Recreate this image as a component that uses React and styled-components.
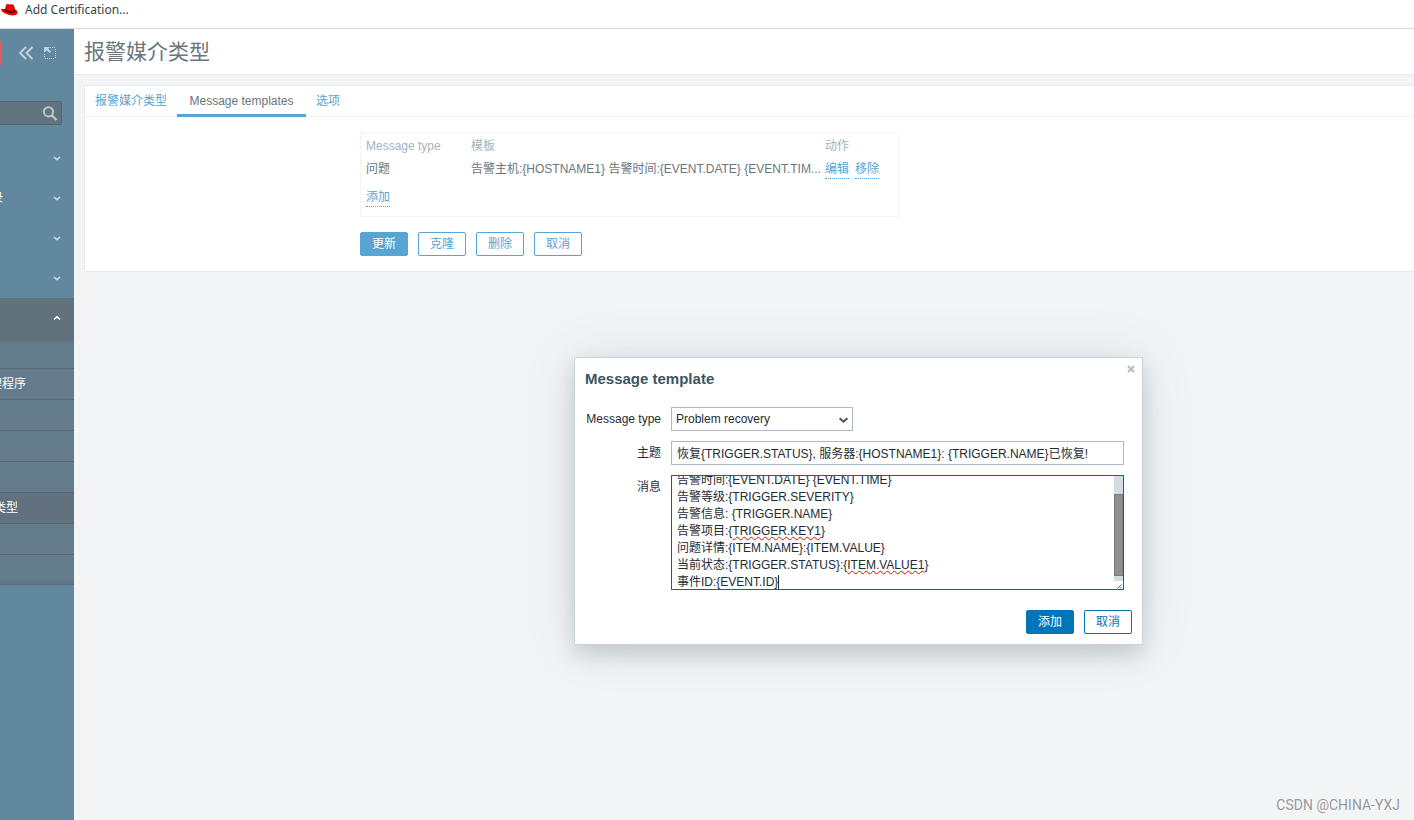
import React, { useEffect, useRef } from "react";
import styled, { createGlobalStyle } from "styled-components";

const GlobalStyle = createGlobalStyle`
  * {
    box-sizing: border-box;
  }
  body {
    margin: 0;
    background-color: #f2f4f6;
    color: #6b767c;
    font-family: "Liberation Sans", "Noto Sans CJK SC", sans-serif;
    font-size: 12px;
    line-height: 17px;
  }
  button, input, select, textarea {
    font: inherit;
  }
`;

const Page = styled.div`
  min-height: 100vh;
  display: flex;
  flex-direction: column;
`;

const BookmarkBar = styled.div`
  display: flex;
  align-items: flex-start;
  gap: 7px;
  height: 29px;
  padding: 1px;
  background-color: white;
  border-bottom: 1px solid #dadada;
`;

const Bookmark = styled.a`
  color: #3c4043;
  font-family: "Noto Sans", sans-serif;
  font-size: 12px;
  text-decoration: none;
`;

const Body = styled.div`
  flex: 1;
  display: flex;
`;

const Sidebar = styled.aside`
  flex: none;
  width: 74px;
  background-color: #62889f;
`;

const SidebarTop = styled.div`
  display: flex;
  align-items: center;
  height: 48px;
`;

const LogoEdge = styled.div`
  width: 2px;
  height: 24px;
  margin-right: 16px;
  background-color: #e45959;
`;

const IconButton = styled.button`
  display: flex;
  padding: 0;
  margin-right: 10px;
  border: none;
  background: none;
  color: #c3d3dc;
`;

const Search = styled.div`
  display: flex;
  align-items: center;
  width: 62px;
  height: 24px;
  margin: 24px 0 13px;
  padding-right: 3px;
  background-color: #61737e;
  border: 1px solid #55656f;
  border-left: none;
  border-radius: 0 2px 2px 0;
`;

const SearchInput = styled.input`
  flex: 1;
  min-width: 0;
  border: none;
  outline: none;
  background: none;
  color: white;
`;

const Menu = styled.ul`
  margin: 0;
  padding: 0;
  list-style: none;
`;

const MenuLink = styled.a`
  display: flex;
  align-items: center;
  justify-content: space-between;
  height: 40px;
  padding-right: 12px;
  background-color: ${(props) => (props.$open ? "#61727d" : "transparent")};
  color: white;
  text-decoration: none;
`;

const MenuLabel = styled.span`
  display: flex;
  justify-content: flex-end;
  width: ${(props) => props.$width}px;
  overflow: hidden;
  white-space: nowrap;
`;

const SubMenu = styled(Menu)`
  background: linear-gradient(#5d6e79, #637b8a 5px calc(100% - 5px), #5d6e79);
`;

const SubLink = styled.a`
  display: flex;
  align-items: center;
  height: ${(props) => (props.$last ? 30 : 31)}px;
  border-bottom: ${(props) => (props.$last ? "none" : "1px solid #596770")};
  background-color: ${(props) => (props.$selected ? "#61727e" : "transparent")};
  color: white;
  text-decoration: none;
`;

const Main = styled.main`
  flex: 1;
  min-width: 0;
`;

const Header = styled.header`
  height: 46px;
  padding: 8px 10px;
  background-color: white;
  border-bottom: 1px solid #e8ebee;
`;

const Title = styled.h1`
  margin: 0;
  font-size: 21px;
  font-weight: normal;
  line-height: 30px;
`;

const Card = styled.section`
  margin: 10px 0 0 10px;
  background-color: white;
  border: 1px solid #e8ebee;
  border-right: none;
`;

const Tabs = styled.nav`
  display: flex;
  height: 31px;
  border-bottom: 1px solid #f0f2f4;
`;

const Tab = styled.a`
  height: 31px;
  min-width: ${(props) => (props.$active ? 129 : 44)}px;
  padding: 7px 10px 0;
  border-bottom: ${(props) => (props.$active ? "3px solid #58a4d2" : "none")};
  color: ${(props) => (props.$active ? "#6b767c" : "#58a4d2")};
  text-align: center;
  text-decoration: none;
`;

const Form = styled.div`
  padding: 15px 10px 15px 275px;
`;

const TableBox = styled.div`
  max-width: 540px;
  height: 85px;
  padding: 2px 0;
  border: 1px solid #f2f4f5;
`;

const Table = styled.table`
  width: 100%;
  table-layout: fixed;
  border-collapse: collapse;
`;

const Cell = styled.td`
  height: ${(props) => (props.$tall ? 34 : 23)}px;
  padding: 0 0 0 5px;
  text-align: left;
  white-space: nowrap;
`;

const HeadCell = styled(Cell)`
  width: ${(props) => props.$width};
  color: #a4b3bc;
  font-weight: normal;
`;

const LinkButton = styled.button`
  height: 18px;
  margin-right: 6px;
  padding: 0;
  border: none;
  border-bottom: 1px dotted #58a4d2;
  background: none;
  color: #58a4d2;
  line-height: 17px;
`;

const Buttons = styled.div`
  display: flex;
  gap: 10px;
  margin-top: 15px;
`;

const Button = styled.button`
  min-width: 48px;
  height: 24px;
  padding: 0 11px;
  border: 1px solid ${(props) => props.$color};
  border-radius: 2px;
  background-color: ${(props) => (props.$filled ? props.$color : "white")};
  color: ${(props) => (props.$filled ? "white" : props.$color)};
  line-height: 22px;
`;

const Dialog = styled.div`
  position: absolute;
  top: 357px;
  left: calc(50% - 133px);
  width: 569px;
  padding: 10px;
  background-color: white;
  border: 1px solid #c8d4d8;
  box-shadow: 0 10px 20px rgba(62, 88, 100, 0.22),
    0 0 50px rgba(82, 105, 115, 0.12);
  color: #1f2c33;
`;

const DialogTitle = styled.h2`
  margin: 1px 0 19px;
  color: #3c5563;
  font-size: 15px;
  line-height: 19px;
`;

const CloseButton = styled.button`
  position: absolute;
  top: 7px;
  right: 7px;
  display: flex;
  padding: 0;
  border: none;
  background: none;
  color: #b4c0c7;
`;

const Fields = styled.form`
  display: grid;
  grid-template-columns: 76px 453px;
  gap: 10px;
`;

const Label = styled.label`
  padding-top: 4px;
  text-align: right;
  white-space: nowrap;
`;

const SelectWrap = styled.div`
  display: grid;
  width: 182px;
  align-items: center;

  > * {
    grid-area: 1 / 1;
  }
  svg {
    justify-self: end;
    margin-right: 3px;
    pointer-events: none;
  }
`;

const Select = styled.select`
  width: 100%;
  height: 24px;
  padding: 0 4px;
  appearance: none;
  background-color: white;
  border: 1px solid #acbbc2;
  border-radius: 0;
  color: #1f2c33;
`;

const TextInput = styled.input`
  height: 24px;
  padding: 0 5px 2px;
  border: 1px solid #acbbc2;
  color: #1f2c33;
`;

const MessageBox = styled.div`
  position: relative;
  display: flex;
  height: 115px;
  border: 1px solid #0069a3;
  overflow: hidden;
`;

const Message = styled.textarea`
  flex: 1;
  padding: 4px 5px;
  border: none;
  outline: none;
  resize: none;
  overflow-y: scroll;
  scrollbar-width: none;
  color: #1f2c33;
  line-height: 17px;
`;

const Track = styled.div`
  display: flex;
  flex-direction: column;
  width: 9px;
  padding-top: 18px;
  background-color: #d3dce0;
`;

const Thumb = styled.div`
  height: 82px;
  margin-bottom: 5px;
  background-color: #8f8f8f;
  border: 1px solid #7c7c7c;
`;

const Grip = styled.svg`
  background-color: white;
`;

/* lies over the textarea and only shows the spelling marks and the caret */
const Marks = styled.div`
  position: absolute;
  left: 5px;
  bottom: -2px;
  color: transparent;
  white-space: pre;
  pointer-events: none;
`;

const Misspelled = styled.span`
  text-decoration: underline wavy #f00 1px;
  text-decoration-skip-ink: none;
  text-underline-offset: 1px;
`;

const Caret = styled.span`
  border-right: 1px solid #1f2c33;
`;

const DialogFooter = styled(Buttons)`
  justify-content: flex-end;
  margin-top: 20px;
`;

const Watermark = styled.div`
  position: absolute;
  right: 14px;
  bottom: 6px;
  color: #96999b;
  font-family: Roboto, sans-serif;
  font-size: 14px;
  line-height: 18px;
  text-shadow: 1px 1px 0 white;
`;

const menu = [
  { id: 1, label: "", width: 0 },
  { id: 2, label: "录", width: 3 },
  { id: 3, label: "", width: 0 },
  { id: 4, label: "", width: 0 },
  { id: 5, label: "", width: 0, open: true },
];

const subMenu = [
  { id: 1, label: "", width: 0 },
  { id: 2, label: "理程序", width: 26 },
  { id: 3, label: "", width: 0 },
  { id: 4, label: "", width: 0 },
  { id: 5, label: "", width: 0 },
  { id: 6, label: "类型", width: 18, selected: true },
  { id: 7, label: "", width: 0 },
  { id: 8, label: "", width: 0, last: true },
];

const messageLines = [
  ["告警主机:{HOSTNAME1}"],
  ["告警时间:{EVENT.DATE} {EVENT.TIME}"],
  ["告警等级:{TRIGGER.SEVERITY}"],
  ["告警信息: {TRIGGER.NAME}"],
  ["告警项目:{", "TRIGGER.KEY1", "}"],
  ["问题详情:{ITEM.NAME}:{ITEM.VALUE}"],
  ["当前状态:{TRIGGER.STATUS}:{", "ITEM.VALUE1", "}"],
  ["事件ID:{EVENT.ID}"],
];

const Chevron = ({ up, width = 10, color = "#cbd8df" }) => (
  <svg width={width} height={width} viewBox="0 0 10 10" fill="none">
    <path
      d={up ? "M2 6.500 5 3.800 8 6.500" : "M2 4 5 6.700 8 4"}
      stroke={color}
      strokeWidth="1.600"
    />
  </svg>
);

const RedHat = () => (
  <svg width="17" height="17" viewBox="0 0 17 17">
    <path
      d="M4 8.300 4.900 4.600C5.200 3.300 6.300 2.800 7.600 3.200c.9.300 1.500.2 2.500 0 1.700-.3 2.800.5 3.200 2l.8 3.200c1.900.800 2.700 2.100 2.300 3.500-.700 2.500-4.300 3-8 2.100C4.300 13 .3 10.800.3 8.800.3 7.500 2 7.500 4 8.300z"
      fill="#e60000"
    />
    <path
      d="M4 8.200c.2 1.700 3.100 2.800 5.900 2.900 2.600.1 4-.8 3.900-2.300"
      fill="none"
      stroke="#300"
      strokeWidth="1.300"
    />
  </svg>
);

const MessageField = () => {
  const ref = useRef(null);
  useEffect(() => {
    ref.current.scrollTop = 25;
  }, []);
  return (
    <MessageBox>
      <Message
        id="message"
        ref={ref}
        spellCheck={false}
        defaultValue={messageLines.map((line) => line.join("")).join("\n")}
      />
      <Marks aria-hidden="true">
        {messageLines.slice(4).map((line, i) => (
          <div key={i}>
            {line[0]}
            {line[1] && <Misspelled>{line[1]}</Misspelled>}
            {i === 3 && <Caret />}
          </div>
        ))}
      </Marks>
      <Track>
        <Thumb />
        <Grip width="9" height="8" viewBox="0 0 9 8">
          <path d="M3.500 7.500 7.500 3.500M6 7.500 7.500 6" stroke="#666" />
        </Grip>
      </Track>
    </MessageBox>
  );
};

const App = () => {
  return (
    <Page>
      <GlobalStyle />
      <BookmarkBar>
        <RedHat />
        <Bookmark href="#">Add Certification...</Bookmark>
      </BookmarkBar>
      <Body>
        <Sidebar>
          <SidebarTop>
            <LogoEdge />
            <IconButton aria-label="Collapse">
              <svg width="16" height="14" viewBox="0 0 16 14" fill="none">
                <path
                  d="M8 1 2 7l6 6M14.500 1l-6 6 6 6"
                  stroke="currentColor"
                  strokeWidth="1.900"
                />
              </svg>
            </IconButton>
            <IconButton aria-label="Hide">
              <svg width="12" height="12" viewBox="0 0 12 12" fill="none">
                <path
                  d="M6 .5h6M11.500 2v10M10 11.500H0M.5 10V6"
                  stroke="currentColor"
                  strokeDasharray="1 1"
                />
                <path
                  d="M0 0h6L4.200 1.800 7 4.600 5.600 6 2.600 3.200.500 5.500H0z"
                  fill="currentColor"
                />
              </svg>
            </IconButton>
          </SidebarTop>
          <Search>
            <SearchInput aria-label="Search" />
            <svg width="16" height="15" viewBox="0 0 16 15" fill="none">
              <circle cx="6.500" cy="5.800" r="4.600" stroke="#bac8d0" strokeWidth="2" />
              <path d="m9.500 9 5 5" stroke="#bac8d0" strokeWidth="2.400" />
            </svg>
          </Search>
          <Menu>
            {menu.map((item) => (
              <li key={item.id}>
                <MenuLink href="#" $open={item.open}>
                  <MenuLabel $width={item.width}>{item.label}</MenuLabel>
                  <Chevron up={item.open} color={item.open ? "#fff" : "#cbd8df"} />
                </MenuLink>
              </li>
            ))}
          </Menu>
          <SubMenu>
            {subMenu.map((item) => (
              <li key={item.id}>
                <SubLink href="#" $selected={item.selected} $last={item.last}>
                  <MenuLabel $width={item.width}>{item.label}</MenuLabel>
                </SubLink>
              </li>
            ))}
          </SubMenu>
        </Sidebar>
        <Main>
          <Header>
            <Title>报警媒介类型</Title>
          </Header>
          <Card>
            <Tabs>
              <Tab href="#">报警媒介类型</Tab>
              <Tab href="#" $active>
                Message templates
              </Tab>
              <Tab href="#">选项</Tab>
            </Tabs>
            <Form>
              <TableBox>
                <Table>
                  <thead>
                    <tr>
                      <HeadCell as="th" $width="105px">Message type</HeadCell>
                      <HeadCell as="th" $width="auto">模板</HeadCell>
                      <HeadCell as="th" $width="79px">动作</HeadCell>
                    </tr>
                  </thead>
                  <tbody>
                    <tr>
                      <Cell>问题</Cell>
                      <Cell>
                        告警主机:{"{HOSTNAME1}"} 告警时间:{"{EVENT.DATE} {EVENT.TIM..."}
                      </Cell>
                      <Cell>
                        <LinkButton>编辑</LinkButton>
                        <LinkButton>移除</LinkButton>
                      </Cell>
                    </tr>
                    <tr>
                      <Cell colSpan={3} $tall>
                        <LinkButton>添加</LinkButton>
                      </Cell>
                    </tr>
                  </tbody>
                </Table>
              </TableBox>
              <Buttons>
                <Button $color="#58a4d2" $filled>更新</Button>
                <Button $color="#58a4d2">克隆</Button>
                <Button $color="#58a4d2">删除</Button>
                <Button $color="#58a4d2">取消</Button>
              </Buttons>
            </Form>
          </Card>
        </Main>
      </Body>
      <Dialog role="dialog" aria-labelledby="dialog-title">
        <CloseButton aria-label="Close">
          <svg width="8" height="8" viewBox="0 0 8 8">
            <path d="m1 1 6 6M7 1 1 7" stroke="currentColor" strokeWidth="2.200" />
          </svg>
        </CloseButton>
        <DialogTitle id="dialog-title">Message template</DialogTitle>
        <Fields>
          <Label htmlFor="type">Message type</Label>
          <SelectWrap>
            <Select id="type">
              <option>Problem recovery</option>
            </Select>
            <Chevron width={13} color="#48545b" />
          </SelectWrap>
          <Label htmlFor="subject">主题</Label>
          <TextInput
            id="subject"
            defaultValue="恢复{TRIGGER.STATUS}, 服务器:{HOSTNAME1}: {TRIGGER.NAME}已恢复!"
          />
          <Label htmlFor="message">消息</Label>
          <MessageField />
        </Fields>
        <DialogFooter>
          <Button $color="#0275b8" $filled>添加</Button>
          <Button $color="#0275b8">取消</Button>
        </DialogFooter>
      </Dialog>
      <Watermark>CSDN @CHINA-YXJ</Watermark>
    </Page>
  );
};

export default App;
